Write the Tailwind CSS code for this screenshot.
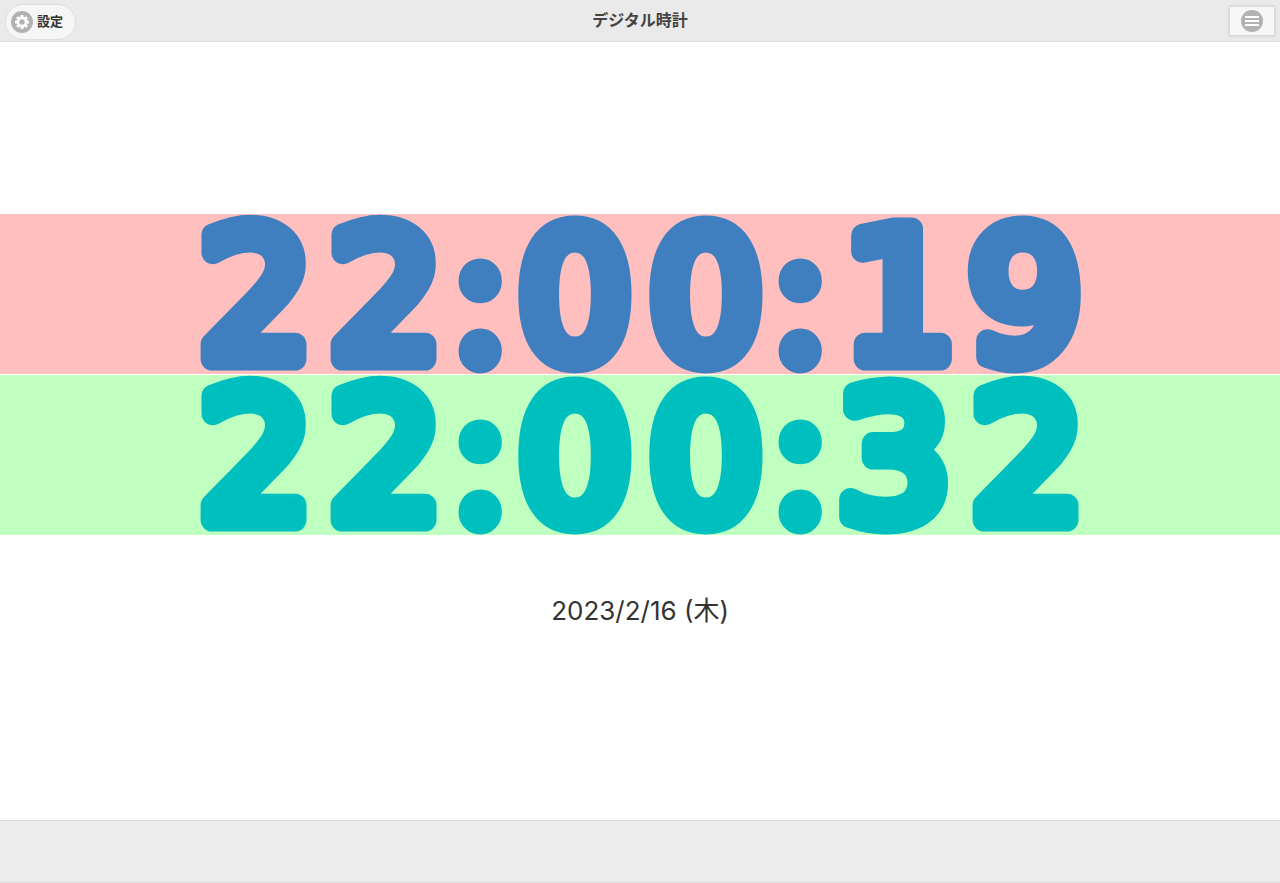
<!DOCTYPE html>
<html lang="ja">
<head>
<meta charset="utf-8">
<meta name="viewport" content="width=device-width, initial-scale=1">
<title>デジタル時計</title>
<script src="https://cdn.jsdelivr.net/npm/@tailwindcss/browser@4"></script>
</head>
<body class="flex min-h-screen flex-col bg-white font-['Liberation_Sans','Noto_Sans_CJK_JP',sans-serif] text-[#333]">
  <header class="grid grid-cols-[1fr_auto_1fr] items-center border-b border-[#ddd] bg-[#eaeaea] px-[5px] pt-1 pb-px">
    <button type="button" class="flex h-9 items-center gap-1 justify-self-start rounded-full border border-[#ddd] bg-[#f6f6f6] pr-3 pl-[5px] text-[13px] font-bold">
      <svg class="size-[22px]" viewBox="0 0 22 22" aria-hidden="true">
        <circle cx="11" cy="11" r="11" fill="#b2b2b2"/>
        <g fill="#fff">
          <rect x="9.5" y="4" width="3" height="14" rx=".6"/>
          <rect x="9.5" y="4" width="3" height="14" rx=".6" transform="rotate(45 11 11)"/>
          <rect x="9.5" y="4" width="3" height="14" rx=".6" transform="rotate(90 11 11)"/>
          <rect x="9.5" y="4" width="3" height="14" rx=".6" transform="rotate(135 11 11)"/>
          <circle cx="11" cy="11" r="5.4"/>
        </g>
        <circle cx="11" cy="11" r="2.7" fill="#b2b2b2"/>
      </svg>
      設定
    </button>
    <h1 class="pb-0.5 text-[16px] leading-5 font-bold text-[#444]">デジタル時計</h1>
    <button type="button" aria-label="メニュー" class="mr-px mb-0.5 grid h-7 w-11 place-items-center justify-self-end bg-[#f6f6f6] shadow-[0_0_3px_1px_rgba(0,0,0,0.12)]">
      <svg class="size-[22px]" viewBox="0 0 22 22" aria-hidden="true">
        <circle cx="11" cy="11" r="11" fill="#b2b2b2"/>
        <path d="M4 6h14v2H4zM4 10h14v2H4zM4 14h14v2H4z" fill="#fff"/>
      </svg>
    </button>
  </header>

  <main class="flex grow flex-col pt-[172px]">
    <section class="flex flex-col gap-px" aria-label="時計">
      <div class="bg-[#ffbfbf]">
        <svg class="mx-auto block w-full max-w-4xl" viewBox="0 0 896 160">
          <text class="font-['DejaVu_Sans',sans-serif] text-[179px]" text-anchor="middle" fill="#407fbf" stroke="#407fbf" stroke-width="23" stroke-linejoin="round"><tspan x="64 194" y="145">22</tspan><tspan class="font-['Noto_Sans_CJK_JP',sans-serif] text-[190px] font-black" stroke-width="3" x="288" y="155">:</tspan><tspan x="383 514" y="145">00</tspan><tspan class="font-['Noto_Sans_CJK_JP',sans-serif] text-[190px] font-black" stroke-width="3" x="608" y="155">:</tspan><tspan x="708 833" y="145">19</tspan></text>
        </svg>
      </div>
      <div class="bg-[#bfffbf]">
        <svg class="mx-auto block w-full max-w-4xl" viewBox="0 0 896 160">
          <text class="font-['DejaVu_Sans',sans-serif] text-[179px]" text-anchor="middle" fill="#00bfbf" stroke="#00bfbf" stroke-width="23" stroke-linejoin="round"><tspan x="64 194" y="145">22</tspan><tspan class="font-['Noto_Sans_CJK_JP',sans-serif] text-[190px] font-black" stroke-width="3" x="288" y="155">:</tspan><tspan x="383 514" y="145">00</tspan><tspan class="font-['Noto_Sans_CJK_JP',sans-serif] text-[190px] font-black" stroke-width="3" x="608" y="155">:</tspan><tspan x="702 836" y="145">32</tspan></text>
        </svg>
      </div>
    </section>
    <p class="mt-[60px] text-center font-['Inter','Noto_Sans_CJK_JP',sans-serif] text-[26px] leading-8">2023/2/16 (木)</p>
  </main>

  <footer class="h-[63px] border-y border-[#ddd] bg-[#ececec]"></footer>
</body>
</html>
